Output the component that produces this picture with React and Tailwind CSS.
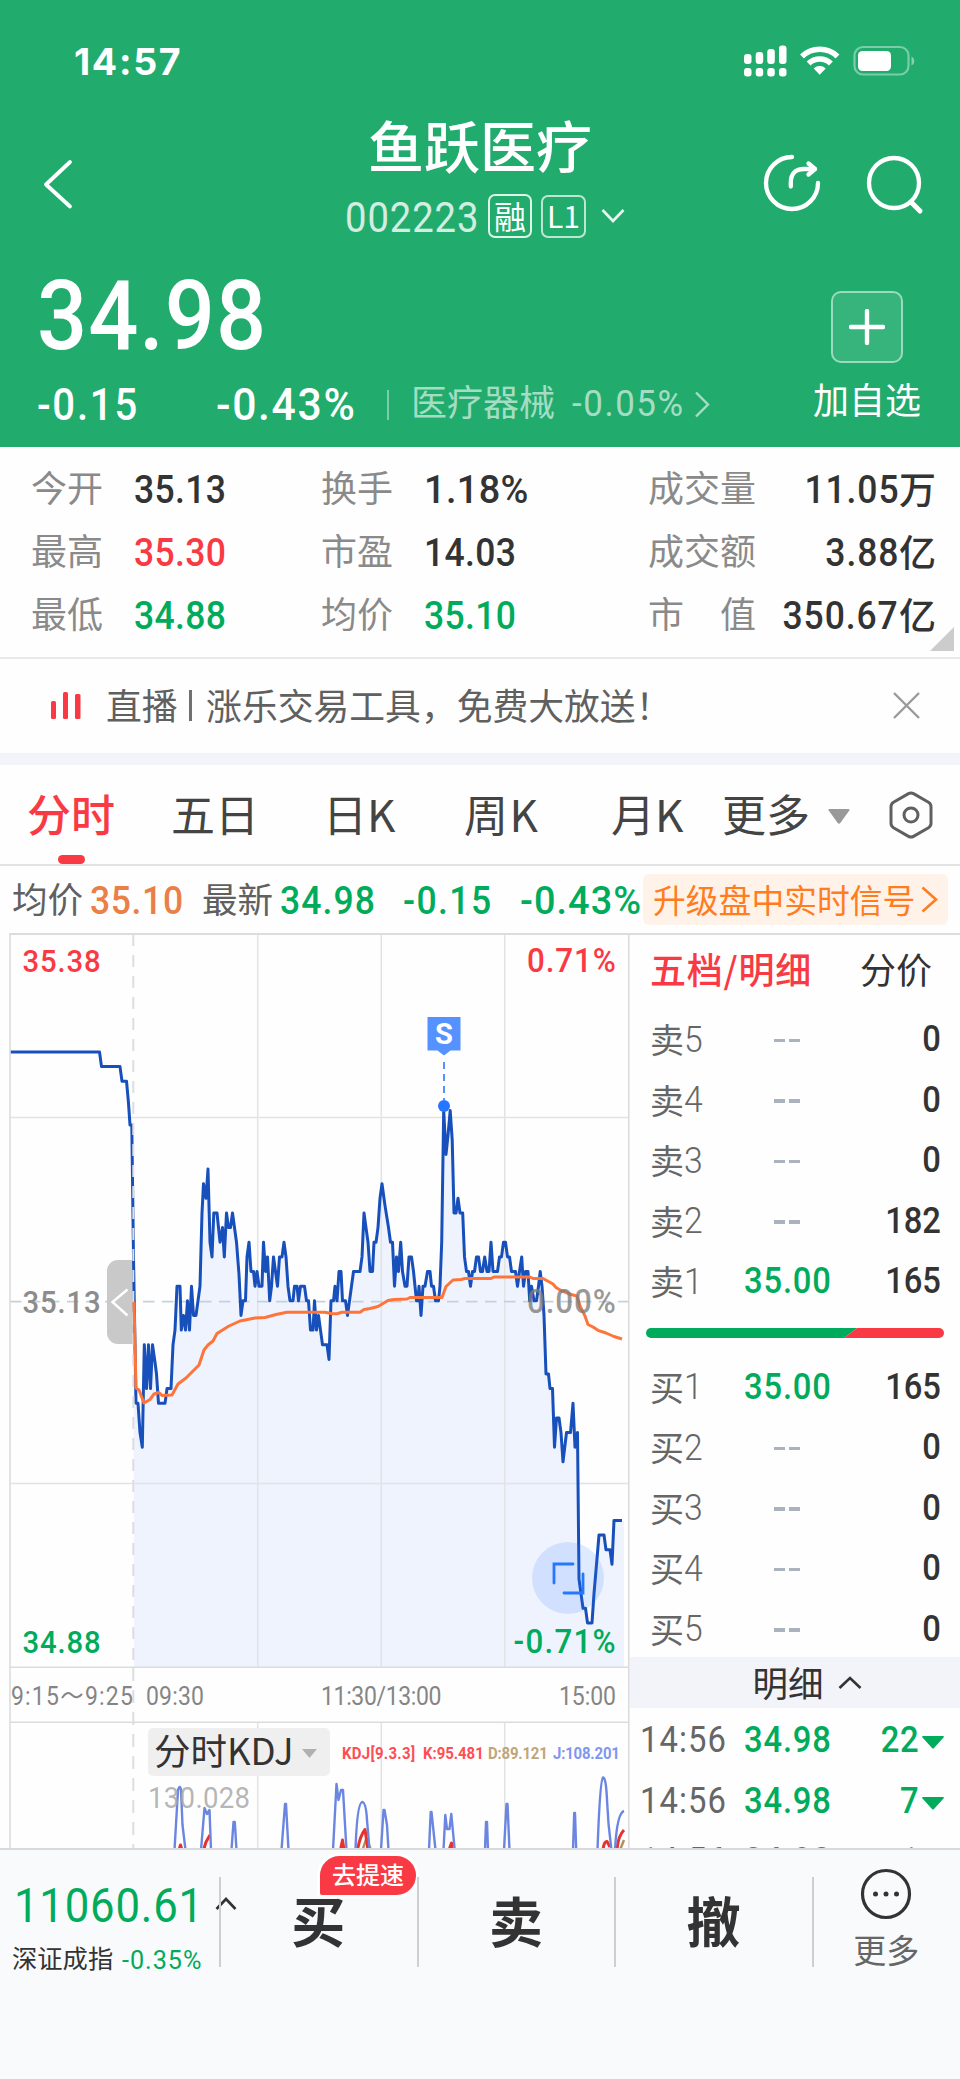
import React from 'react'

// narrow DIN-like figures
const num = 'font-[Roboto,sans-serif] inline-block origin-left scale-x-[.91]'
const numRight = 'font-[Roboto,sans-serif] inline-block origin-right scale-x-[.91]'
const numPct = 'font-[Roboto,sans-serif] inline-block origin-left scale-x-[.97]'

const quotes = [
  { label: '今开', value: '35.13', color: 'text-[#333]' },
  { label: '最高', value: '35.30', color: 'text-[#f93a44]' },
  { label: '最低', value: '34.88', color: 'text-[#00ab5c]' },
]

const ratios = [
  { label: '换手', value: '1.18%', color: 'text-[#333]' },
  { label: '市盈', value: '14.03', color: 'text-[#333]' },
  { label: '均价', value: '35.10', color: 'text-[#00ab5c]' },
]

const totals = [
  { label: ['成', '交', '量'], value: '11.05', unit: '万' },
  { label: ['成', '交', '额'], value: '3.88', unit: '亿' },
  { label: ['市', '值'], value: '350.67', unit: '亿' },
]

const asks = [
  { side: '卖', level: 5, vol: '0' },
  { side: '卖', level: 4, vol: '0' },
  { side: '卖', level: 3, vol: '0' },
  { side: '卖', level: 2, vol: '182' },
  { side: '卖', level: 1, price: '35.00', vol: '165' },
]

const bids = [
  { side: '买', level: 1, price: '35.00', vol: '165' },
  { side: '买', level: 2, vol: '0' },
  { side: '买', level: 3, vol: '0' },
  { side: '买', level: 4, vol: '0' },
  { side: '买', level: 5, vol: '0' },
]

const ticks = [
  { time: '14:56', price: '34.98', vol: '22' },
  { time: '14:56', price: '34.98', vol: '7' },
  { time: '14:56', price: '34.98', vol: '1' },
]

// [x, ticks above or below the previous close], one tick = 0.01
const PRICE = [
  [10, 17], [99.5, 17], [101.5, 16], [120, 16], [122, 15], [126.5, 15], [128.5, 13.5], [130, 12], [131.8, 12],
  [133.5, 3], [136, -7], [138, -7], [140, -9], [142.3, -10], [144.3, -3], [146.5, -6], [148.5, -3], [150.5, -6],
  [152.5, -3], [155, -4.2], [156.5, -5], [158.5, -7], [165, -7], [167, -6], [171, -6], [173, -3], [175, -2],
  [177, 1], [180, 1], [181.3, -2], [183.5, -1], [185.5, -2], [187.5, 0], [189.5, -2], [191.5, 1], [193.5, -1],
  [196, -1], [198, 0], [200, 1], [202, 6], [203.5, 8], [206, 7], [208, 9], [210, 4], [212, 3], [213.8, 6],
  [217, 6], [220, 4], [222.5, 5], [224.3, 3], [226.5, 6], [228.5, 5], [230.5, 5], [232.5, 6], [236.5, 4],
  [239, 1.8], [241, -1], [243, 0], [245.5, 0], [247, 3], [249, 4], [251, 2], [253.5, 2], [255, 1], [257, 2],
  [259, 1], [262, 1], [263.5, 4], [265.5, 2], [267.5, 3], [269.7, 0], [271.5, 1], [273.5, 3], [275.5, 2],
  [277.5, 1], [279.5, 3], [282, 3], [284, 4], [286, 3], [288, 1], [290, 0], [293, 0], [294.5, 1], [297, 1],
  [298.5, 0], [300.5, 1], [304.5, 1], [306.5, 0], [308.5, 0], [310.5, -2], [313, -2], [314.5, 0], [316.5, -2],
  [318.5, -1], [320.5, -2], [322.5, -3], [327, -3], [329, -4], [331, 0], [333.5, 0], [335, 1], [337, 0],
  [339, 2], [341, 2], [342.5, 0], [345.5, 0], [347.5, -1], [349.5, 0], [353.5, 2], [360, 2], [362, 3], [364, 6],
  [366, 5], [368, 4], [370, 2], [372.5, 2], [374, 4], [376, 4], [378, 5], [380, 7], [382, 8], [385, 6.5],
  [388.5, 5], [390.5, 4], [392.5, 4], [394.5, 1], [396.5, 3], [398.5, 2], [400.7, 4], [402.5, 2], [405, 1],
  [407, 1], [409, 3], [411.5, 3], [413.5, 2], [416.5, 0], [418, 0], [419, 1], [421, -1], [423, 1], [425, 1],
  [427.5, 2], [430, 2], [431.5, 1], [433.5, 1], [435.5, 0], [438.5, 0], [440, 1], [441.7, 4], [443.7, 13],
  [446, 10], [448, 11.3], [450.2, 13], [452.2, 11], [454, 6], [456, 6], [458, 7], [460, 6], [462.7, 6],
  [464.5, 3], [466.5, 2], [468.5, 2], [470.5, 1], [472.5, 2], [474.5, 2], [476.5, 3], [478.5, 3], [480.5, 2],
  [482.5, 2], [484.7, 3], [487, 2], [489, 2], [491, 4], [493, 2], [497.5, 2], [499.5, 3], [501.5, 3],
  [503.5, 4], [505.5, 4], [507.5, 3], [509.5, 3], [511.5, 2], [515.5, 2], [517.5, 1], [519.5, 2], [521.7, 3],
  [523.5, 1], [525.5, 2], [528, 2], [529.7, 0], [531.5, 1], [534, 0], [536.5, 0], [538.5, 1], [540.2, 2],
  [542, 1], [544, -1], [546, -5], [548.5, -5], [550, -6], [552.5, -6], [554.5, -10], [556.5, -8], [559, -8],
  [561, -9], [563, -11], [566.5, -9], [570.5, -9], [573, -7], [575, -10], [577.5, -9], [579, -19], [583, -21],
  [585.5, -21], [587.5, -22], [592, -22], [594, -20], [596.5, -18], [599, -16], [604, -16], [606, -17],
  [610, -17], [612, -18], [614, -15], [622, -15],
]

const AVERAGE = [
  [134, 1302], [136, 1388], [139, 1390], [144, 1403], [150, 1399.5], [154, 1394], [159, 1392.5], [162, 1395.5],
  [172, 1395], [178, 1384], [186, 1378], [192, 1372], [199, 1365], [204, 1350], [208, 1345], [213, 1341],
  [217, 1333.5], [229, 1326], [240, 1321], [255, 1318], [265, 1317.5], [276, 1314.5], [287, 1312.3], [325, 1312.3],
  [332, 1313.7], [337, 1313.7], [342, 1312.3], [360, 1312.3], [364, 1309.5], [370, 1308.5], [378, 1306.5],
  [388, 1300.5], [394, 1299.5], [407, 1299], [410, 1297.5], [442, 1297.5], [446, 1286.5], [453, 1280], [461, 1279.5],
  [465, 1278.5], [491, 1278.5], [494, 1277], [530, 1277], [533, 1278.5], [543, 1278.5], [553, 1284], [556, 1287.5],
  [560, 1290], [571, 1294.5], [577, 1296], [580, 1306], [585, 1316], [588, 1324.5], [593, 1327], [598, 1330.3],
  [606, 1333], [614, 1336.5], [622, 1339],
]

const pricePoints = PRICE.map(([x, n]) => `${x},${(1300.8 - n * 14.64).toFixed(1)}`)
const session = pricePoints.slice(9).join(' ')

const KDJ_J =
  'M174.5 1850L178 1790Q180 1784 181 1790L182.5 1825L185.5 1850 M201 1850L204.5 1808L207 1814L209.5 1810L211 1850 M231.5 1850L233.5 1822H234.8L236.5 1850 M281.5 1850L285 1804H286L288.5 1850 M333 1850L336.5 1784L338.5 1800L341 1790H343L346.5 1850 M355.5 1850Q357 1804 362 1802Q366 1802 367 1820L369.5 1850 M381 1850L383.5 1810H384.5L387 1825L388.5 1850 M429 1850L430.7 1812H431.5L435.5 1850 M443.5 1850L445.3 1815L447 1829H449.5L451.3 1814L454.7 1850 M485 1850L486 1822H487L488 1850 M504 1850L506.5 1804H507.5L509.5 1850 M573 1850L574.2 1813H575L576.2 1850 M597.5 1850Q600 1780 603 1777.5Q606 1777 607 1800Q608 1825 611.5 1850 M615 1850Q617 1813 624 1811'
const KDJ_K =
  'M179 1850L180.5 1845L182 1850 M203.5 1850L206 1842L210 1835 M340.5 1850L342.5 1840L344 1850 M357.5 1850Q360 1836 365 1829.5L368 1850 M449 1850L451.5 1843L452 1850 M603 1850Q604 1841 607 1841.5L610 1847 M617 1850Q618 1836 624 1830'
const KDJ_D = 'M362.5 1850L366.5 1838L371 1850 M620 1850L624 1840'

function StatusBar() {
  return (
    <div className="flex h-[120px] items-start justify-between pl-[74px] pr-[45px] pt-[40px]">
      <span className="font-[Inter,sans-serif] text-[37.500px] font-bold leading-[44px] tracking-[1.700px]">14:57</span>
      <svg className="mt-[4px] h-[34px] w-[172px]" viewBox="743 44 172 34" fill="currentColor">
        {[744, 755.7, 767.3, 779].map((x, i) => (
          <g key={x}>
            <rect x={x} y={[54, 52, 49, 45.5][i]} width="7.5" height={[10, 12, 15, 18.5][i]} rx="3" />
            <rect x={x} y="68" width="7.5" height="8.5" rx="3" />
          </g>
        ))}
        <g fill="none" stroke="currentColor" strokeWidth="5.6">
          <path d="M802 56.500a25.500 25.500 0 0 1 35.500 0" />
          <path d="M808.600 63.500a16 16 0 0 1 22.300 0" />
        </g>
        <path d="M819.700 74.800l-6-6.200a8.500 8.500 0 0 1 12 0z" />
        <rect x="854.500" y="47" width="54" height="27.500" rx="8.500" fill="none" stroke="currentColor" strokeWidth="2.200" opacity=".4" />
        <path d="M911.500 56.500a5 5 0 0 1 0 9z" opacity=".45" />
        <rect x="858" y="51" width="33" height="20" rx="4.500" />
      </svg>
    </div>
  )
}

function Header() {
  return (
    <header className="h-[447px] bg-[#21ac6e] text-white">
      <StatusBar />
      <div className="flex h-[126px] items-start justify-between pl-[42px] pr-[34px]">
        <svg className="mt-[38px] h-[54px] w-[156px]" viewBox="42 158 156 54" fill="none" stroke="currentColor" strokeWidth="3.8" strokeLinecap="round" strokeLinejoin="round">
          <path d="M70 162L46 184.500L70 206.500" />
        </svg>
        <div className="flex w-[300px] flex-col items-center">
          <h1 className="-mt-[10px] h-[68px] text-[56px] font-medium leading-[68px]">鱼跃医疗</h1>
          <div className="ml-[10px] mt-[14px] flex h-[48px] items-center">
            <span className={`${num} mt-[3px] w-[132px] text-[42px] leading-[48px] tracking-[1px] opacity-80`}>002223</span>
            <span className="ml-[11px] flex h-[44px] w-[44px] items-center justify-center rounded-[7px] border-2 border-white/85 pb-[2px] text-[32px] leading-none">融</span>
            <span className="ml-[9px] flex h-[43px] w-[45px] items-center justify-center rounded-[7px] border-2 border-white/70 pb-[2px] text-[30px] leading-none">L1</span>
            <svg className="ml-[15px] h-4 w-6" viewBox="0 0 24 16" fill="none" stroke="currentColor" strokeWidth="2.600" opacity=".9">
              <path d="M1.500 2L12 13L22.500 2" />
            </svg>
          </div>
        </div>
        <svg className="mt-[32px] h-[64px] w-[164px]" viewBox="762 152 164 64" fill="none" stroke="currentColor" strokeWidth="4.300" strokeLinecap="round" strokeLinejoin="round">
          <path d="M792 157a26 26 0 1 0 26 26" />
          <path d="M790.800 186.500v-4c0-9 5-13.500 13-13.500h11" />
          <path d="M808.500 163.500l6.500 5.500-6.500 5.500" />
          <circle cx="894" cy="183" r="25" />
          <path d="M911 202l9 9" strokeWidth="5" />
        </svg>
      </div>
      <div className="flex justify-between pl-[36px] pr-[39px]">
        <div>
          <div className={`${num} ml-px mt-[14px] h-[112px] text-[97px] font-medium leading-[112px] tracking-[1.100px]`}>34.98</div>
          <div className="mt-[6px] flex h-[54px] items-center whitespace-nowrap">
            <span className={`${num} w-[180px] pl-px text-[44px] font-medium tracking-[2px]`}>-0.15</span>
            <span className={`${numPct} w-[171px] text-[44px] font-medium tracking-[1.700px]`}>-0.43%</span>
            <span className="h-[30px] w-[2px] bg-white/40" />
            <span className="mb-[10px] ml-[22px] text-[36px] text-white/60">医疗器械</span>
            <span className={`${numPct} mb-[2px] ml-[17px] w-[112px] text-[36px] tracking-[1.600px] text-white/60`}>-0.05%</span>
            <svg className="mb-[2px] ml-[10px] h-[27px] w-4" viewBox="0 0 16 27" fill="none" stroke="currentColor" strokeWidth="2.400" opacity=".6">
              <path d="M2 1.500L14 13.500L2 25.500" />
            </svg>
          </div>
        </div>
        <div className="flex w-[108px] flex-col items-center pt-[45px]">
          <div className="flex size-[72px] items-center justify-center rounded-[10px] border-2 border-white/50 bg-white/10">
            <svg className="size-9" viewBox="0 0 36 36" stroke="currentColor" strokeWidth="4.400" strokeLinecap="round">
              <path d="M18 2v32M2 18h32" />
            </svg>
          </div>
          <span className="mt-[8px] whitespace-nowrap text-[36px] leading-[54px]">加自选</span>
        </div>
      </div>
    </header>
  )
}

function QuoteColumn({ rows, className }) {
  return (
    <div className={className}>
      {rows.map((r) => (
        <div key={r.label} className="flex h-[63px] items-center">
          <span className="mb-[4px] w-[103px] text-[36px] text-[#8a8a8a]">{r.label}</span>
          <span className={`${r.value.endsWith('%') ? numPct : num} ${r.color} mt-[5px] text-[39px] font-medium tracking-[0.400px]`}>
            {r.value}
          </span>
        </div>
      ))}
    </div>
  )
}

function Quotes() {
  return (
    <section className="relative flex h-[212px] border-b-2 border-[#e9e9ea] pl-[31px] pt-[9px]">
      <QuoteColumn rows={quotes} className="w-[290px]" />
      <QuoteColumn rows={ratios} className="w-[327px]" />
      <div className="w-[288px]">
        {totals.map((r) => (
          <div key={r.unit + r.value} className="flex h-[63px] items-center justify-between">
            <span className="mb-[4px] flex w-[108px] justify-between text-[36px] text-[#8a8a8a]">
              {r.label.map((c) => <span key={c}>{c}</span>)}
            </span>
            <span className="mt-[5px] flex items-center whitespace-nowrap text-[#333]">
              <span className={`${numRight} text-[39px] font-medium tracking-[1px]`}>{r.value}</span>
              <span className="mb-[3px] text-[37px] font-medium leading-none">{r.unit}</span>
            </span>
          </div>
        ))}
      </div>
      <svg className="absolute bottom-[6px] right-[6px] size-6" viewBox="0 0 24 24" fill="#ccc">
        <path d="M24 0v24H0z" />
      </svg>
    </section>
  )
}

function LiveNotice() {
  return (
    <section className="flex h-[94px] items-center pb-[2px] pl-[50px] pr-[40px] text-[35.800px] text-[#606060]">
      <svg className="mt-[2px] h-[28px] w-[31px]" viewBox="0 0 31 28" fill="#f93a44">
        <rect x="1" y="9" width="5" height="18" rx="1.500" />
        <rect x="13" y="0" width="5" height="27" rx="1.500" />
        <rect x="25" y="2" width="5.500" height="25" rx="1.500" />
      </svg>
      <span className="ml-[25px]">直播</span>
      <span className="ml-[11px] mr-[14.500px] h-[31px] w-[3px] bg-[#707070]" />
      <span className="grow whitespace-nowrap">涨乐交易工具，免费大放送！</span>
      <svg className="size-[27px]" viewBox="0 0 27 27" stroke="#9a9a9a" strokeWidth="2.400">
        <path d="M1 1L26 26M26 1L1 26" />
      </svg>
    </section>
  )
}

function Tabs() {
  return (
    <nav className="flex h-[101px] items-center border-b-2 border-[#e2e2e3] pl-[27px] text-[44px] text-[#444]">
      <div className="relative flex h-full w-[144px] items-center pb-[4px] font-medium text-[#f93a44]">
        分时
        <span className="absolute bottom-0 left-[31px] h-[9px] w-[27px] rounded-full bg-[#f93a44]" />
      </div>
      <span className="w-[152px] pb-[4px]">五日</span>
      <span className="w-[141px] pb-[4px]">日K</span>
      <span className="w-[147px] pb-[4px] tracking-[1.500px]">周K</span>
      <span className="w-[111px] pb-[4px]">月K</span>
      <span className="w-[106px] pb-[4px]">更多</span>
      <svg className="mt-[3px] h-[15px] w-[22px]" viewBox="0 0 22 15" fill="#999">
        <path d="M1.500 0h19q1.500 0 .8 1.500l-9 12.500q-1.300 1.500-2.600 0l-9-12.500q-.7-1.500.8-1.500z" />
      </svg>
      <svg className="ml-[38px] h-[48px] w-[46px]" viewBox="0 0 46 48" fill="none" stroke="#606060" strokeWidth="3">
        <path d="M20.500 2.600q2.500-1.400 5 0l15 8.700q2.500 1.500 2.500 4.400v16.600q0 2.900-2.500 4.400l-15 8.700q-2.500 1.400-5 0l-15-8.700q-2.500-1.500-2.500-4.400v-16.600q0-2.900 2.500-4.400z" />
        <circle cx="23" cy="24" r="7" />
      </svg>
    </nav>
  )
}

function SummaryBar() {
  return (
    <div className="flex h-[67px] items-center pl-[12px] text-[35.500px] text-[#606060]">
      <span className="mb-[4px] w-[78px]">均价</span>
      <span className={`${num} mt-[3px] w-[112px] text-[39px] font-medium tracking-[0.700px] text-[#ea7f48]`}>35.10</span>
      <span className="mb-[4px] w-[78px]">最新</span>
      <span className={`${num} mt-[3px] w-[122px] text-[39px] font-medium tracking-[1.200px] text-[#00ab5c]`}>34.98</span>
      <span className={`${num} mt-[3px] w-[118px] pl-px text-[39px] font-medium tracking-[1.600px] text-[#00ab5c]`}>-0.15</span>
      <span className={`${numPct} mt-[3px] w-[123px] text-[39px] font-medium tracking-[1.100px] text-[#00ab5c]`}>-0.43%</span>
      <div className="flex h-[51px] w-[305px] items-center justify-between rounded-[6px] bg-[#fff3e9] px-[10px] text-[32.800px] text-[#ff7d1e]">
        <span className="whitespace-nowrap">升级盘中实时信号</span>
        <svg className="h-[27px] w-[17px]" viewBox="0 0 17 27" fill="none" stroke="currentColor" strokeWidth="2.600">
          <path d="M1.500 1.500L15 13.500L1.500 25.500" />
        </svg>
      </div>
    </div>
  )
}

function Chart() {
  return (
    <div className="relative h-[915px] w-[630px]">
      <svg className="block h-[915px] w-[630px]" viewBox="0 933 630 915" fill="none">
        <polygon points={`134,1667 ${session} 624,1521 624,1667`} fill="#eff3fe" />
        <g stroke="#e3e3e5" strokeWidth="1.500">
          <path d="M10 1117.500H629M10 1483.500H629" />
          <path d="M257.700 934V1667M381.300 934V1667M504.700 934V1667" />
          <path d="M257.700 1723V1848M381.300 1723V1848M504.700 1723V1848" />
        </g>
        <path d="M10 1301.700H629" stroke="#c3d1de" strokeWidth="1.800" strokeDasharray="11.500 7.500" />
        <g className="font-[Roboto,sans-serif]" fontSize="31.500" fontWeight="500">
          <text transform="translate(22.500 1313) scale(.93 1)" fill="#8c8c8c" textLength="84">35.13</text>
          <text transform="translate(22.500 972) scale(.93 1)" fill="#f93a44" textLength="84">35.38</text>
          <text transform="translate(22.500 1653) scale(.93 1)" fill="#00ab5c" textLength="84">34.88</text>
        </g>
        <path d="M133 1260v84h-15a11 11 0 0 1-11-11v-62a11 11 0 0 1 11-11z" fill="#c9c9c9" />
        <polyline points={pricePoints.join(' ')} stroke="#174fbb" strokeWidth="3" strokeLinejoin="round" />
        <path d="M133.300 934V1667" stroke="#dedee0" strokeWidth="2" strokeDasharray="12 9" />
        <path d="M127.500 1289.500L112.500 1302L127.500 1315.500" stroke="#fff" strokeWidth="2.400" />
        <polyline points={AVERAGE.map((p) => p.join(',')).join(' ')} stroke="#ff7439" strokeWidth="3" strokeLinejoin="round" />
        <g className="font-[Roboto,sans-serif]" fontSize="33" fontWeight="500">
          <text transform="translate(527 972) scale(.95 1)" fill="#f93a44" textLength="93.500">0.71%</text>
          <text transform="translate(527 1313) scale(.95 1)" fill="#7d7d7d" fillOpacity=".8" textLength="93.500">0.00%</text>
          <text transform="translate(513.500 1653) scale(.95 1)" fill="#00ab5c" textLength="107.500">-0.71%</text>
        </g>
        <circle cx="568" cy="1578" r="36" fill="#2979ff" fillOpacity=".15" />
        <path d="M573 1564H554V1583M583 1574V1593H564" stroke="#2676ff" strokeWidth="2.800" strokeLinecap="round" />
        <path d="M427.500 1017h33v33.500h-10l-6.500 5-6.500-5h-10z" fill="#5592ff" />
        <text x="444" y="1044" textAnchor="middle" fill="#fff" fontSize="29" fontWeight="700" className="font-[Roboto,sans-serif]">S</text>
        <path d="M444 1062V1100" stroke="#5592ff" strokeWidth="2" strokeDasharray="7 5" />
        <circle cx="444" cy="1106" r="6" fill="#2676ff" />
        <g stroke="#dcdcde" strokeWidth="1.600">
          <path d="M10 933V1848M628.800 933V1848" />
          <path d="M10 1667.300H629M10 1722.300H629" />
        </g>
        <path d="M10 934H630" stroke="#dcdcde" strokeWidth="2" />
        <path d="M133.300 1668V1848" stroke="#dedee0" strokeWidth="2" strokeDasharray="13 9" />
        <g className="font-[Roboto,sans-serif]" fontSize="25" fill="#858585">
          <text transform="translate(11 1704.500) scale(.92 1)" textLength="52">9:15</text>
          <path d="M62 1698q5-8 10-3t10-1" stroke="#858585" strokeWidth="2" fill="none" />
          <text transform="translate(85 1704.500) scale(.92 1)" textLength="52">9:25</text>
          <text transform="translate(146 1704.500) scale(.92 1)" textLength="63">09:30</text>
          <text transform="translate(321 1704.500) scale(.92 1)" textLength="131">11:30/13:00</text>
          <text transform="translate(559 1704.500) scale(.92 1)" textLength="62">15:00</text>
        </g>
        <g strokeWidth="2.400" strokeLinejoin="round">
          <path d={KDJ_D} stroke="#b0905a" />
          <path d={KDJ_K} stroke="#e8312f" strokeWidth="3" />
          <path d={KDJ_J} stroke="#6b86e0" />
        </g>
        <text transform="translate(148 1808) scale(.92 1)" className="font-[Roboto,sans-serif]" fontSize="30" fill="#a9a9a9" fillOpacity=".85" textLength="111">130.028</text>
        <g className="font-[Roboto,sans-serif]" fontSize="17" fontWeight="700">
          <text transform="translate(342 1759) scale(.88 1)" fill="#ff4d55" textLength="83">KDJ[9.3.3]</text>
          <text transform="translate(423 1759) scale(.88 1)" fill="#ff4d55" textLength="69">K:95.481</text>
          <text transform="translate(488 1759) scale(.88 1)" fill="#bfa678" textLength="68">D:89.121</text>
          <text transform="translate(553 1759) scale(.88 1)" fill="#7f97f0" textLength="76">J:108.201</text>
        </g>
      </svg>
      <div className="absolute left-[148px] top-[795px] flex h-[48px] w-[182px] items-center rounded-[5px] bg-[#efefef] pb-[4px] pl-[6px] text-[36.500px] text-[#333]">
        <span className="w-[148px] whitespace-nowrap">分时KDJ</span>
        <svg className="mt-[7px] h-[9px] w-[15px]" viewBox="0 0 15 9" fill="#b0b0b0">
          <path d="M0 0h15L7.500 9z" />
        </svg>
      </div>
    </div>
  )
}

function BookRow({ side, level, price, vol }) {
  return (
    <div className="flex h-[60.500px] items-center">
      <span className="flex w-[94px] items-center text-[#666]">
        <span className="text-[34px]">{side}</span>
        <span className={`${num} text-[37px] font-light`}>{level}</span>
      </span>
      {price ? (
        <span className={`${num} w-[84px] text-[36px] font-medium tracking-[0.900px] text-[#00ab5c]`}>{price}</span>
      ) : (
        <span className="flex w-[84px] justify-center gap-[4px] pl-[2px] pt-[2px]">
          <i className="h-[3.500px] w-[11px] bg-[#aab2bd]" />
          <i className="h-[3.500px] w-[11px] bg-[#aab2bd]" />
        </span>
      )}
      <span className={`${numRight} grow text-right text-[36px] font-medium text-[#333]`}>{vol}</span>
    </div>
  )
}

function OrderBook() {
  return (
    <div className="h-[915px] w-[330px] overflow-hidden border-t-2 border-[#dcdcde]">
      <div className="flex h-[74px] items-center justify-between pb-[9px] pl-[20px] pr-[28px] text-[36px]">
        <span className="font-medium tracking-[0.800px] text-[#f93a44]">五档/明细</span>
        <span className="text-[#333]">分价</span>
      </div>
      <div className="pl-[20px] pr-[19px]">
        {asks.map((r) => <BookRow key={r.level} {...r} />)}
      </div>
      <svg className="mb-[19px] ml-[16px] mt-[16px] block h-[10px] w-[298px]" viewBox="0 0 298 10">
        <path d="M5 0H211L198 10H5a5 5 0 0 1 0-10z" fill="#00ab5c" />
        <path d="M211 0h82a5 5 0 0 1 0 10H198z" fill="#f93a44" />
      </svg>
      <div className="-mb-[2px] pl-[20px] pr-[19px]">
        {bids.map((r) => <BookRow key={r.level} {...r} />)}
      </div>
      <div className="mb-[2px] flex h-[51px] items-center justify-center bg-[#f3f4f9] pb-[2px] pl-[24px] text-[35.500px] text-[#333]">
        明细
        <svg className="ml-[14px] mt-[2px] h-[13px] w-6" viewBox="0 0 24 13" fill="none" stroke="currentColor" strokeWidth="2.600">
          <path d="M1.500 12L12 2L22.500 12" />
        </svg>
      </div>
      {ticks.map((t, i) => (
        <div key={i} className="flex h-[60.500px] items-center pl-[10px] pr-[16px] text-[36px] font-medium text-[#00ab5c]">
          <span className={`${num} w-[104px] font-normal tracking-[1.200px] text-[#666]`}>{t.time}</span>
          <span className={`${num} w-[90px] tracking-[0.900px]`}>{t.price}</span>
          <span className={`${numRight} grow text-right tracking-[0.500px]`}>{t.vol}</span>
          <svg className="ml-[3px] mt-[5px] h-[13px] w-[22px]" viewBox="0 0 22 13" fill="currentColor">
            <path d="M1 0h20q1.500.3.500 1.500L12 12q-1 1-2 0L.5 1.500Q-.5.300 1 0z" />
          </svg>
        </div>
      ))}
    </div>
  )
}

function BottomBar() {
  return (
    <footer className="flex h-[231px] items-start border-t-2 border-[#d8d9dc] bg-[#f9fafc] pt-[27px] text-[#333]">
      <div className="relative h-[90px] w-[219px] pl-[12px]">
        <div className={`${num} ml-[2px] block h-[60px] text-[48px] leading-[58px] tracking-[0.900px] text-[#00ab5c]`}>11060.61</div>
        <div className="flex h-[42px] items-center whitespace-nowrap text-[25.300px]">
          深证成指
          <span className={`${numPct} ml-[9px] mt-[4px] text-[26px] tracking-[1px] text-[#00ab5c]`}>-0.35%</span>
        </div>
        <svg className="absolute left-[215px] top-[20px] h-[13px] w-[22px]" viewBox="0 0 22 13" fill="none" stroke="currentColor" strokeWidth="2.600">
          <path d="M1.500 12L11 2L20.500 12" />
        </svg>
      </div>
      {['买', '卖', '撤'].map((c) => (
        <div key={c} className="relative flex h-[90px] w-[197.600px] items-center justify-center border-l-2 border-[#cfcfd2] pb-[4px] pr-px text-[54px] font-bold leading-none">
          {c}
          {c === '买' && (
            <span className="absolute left-[96px] top-[-24px] flex h-[45px] w-[102px] items-center justify-center rounded-[23px] rounded-bl-[5px] border-[3px] border-white bg-[#f93a44] pb-[4px] text-[24px] font-medium text-white">
              去提速
            </span>
          )}
        </div>
      ))}
      <div className="flex h-[90px] w-[147px] flex-col items-center border-l-2 border-[#cfcfd2]">
        <svg className="mt-[-9px] size-[52px] shrink-0" viewBox="0 0 52 52" fill="#333">
          <circle cx="26" cy="26" r="23.500" fill="none" stroke="#333" strokeWidth="3.200" />
          <circle cx="15.500" cy="26" r="2.500" />
          <circle cx="26" cy="26" r="2.500" />
          <circle cx="36.500" cy="26" r="2.500" />
        </svg>
        <span className="mt-[6px] text-[33px] leading-[46px] text-[#666]">更多</span>
      </div>
    </footer>
  )
}

export default function App() {
  return (
    <div className="h-[2079px] w-[960px] overflow-hidden bg-[#fefefe] font-['Noto_Sans_CJK_SC',sans-serif] leading-none">
      <Header />
      <Quotes />
      <LiveNotice />
      <div className="h-[12px] bg-[#f3f4f9]" />
      <Tabs />
      <SummaryBar />
      <div className="flex">
        <Chart />
        <OrderBook />
      </div>
      <BottomBar />
    </div>
  )
}
